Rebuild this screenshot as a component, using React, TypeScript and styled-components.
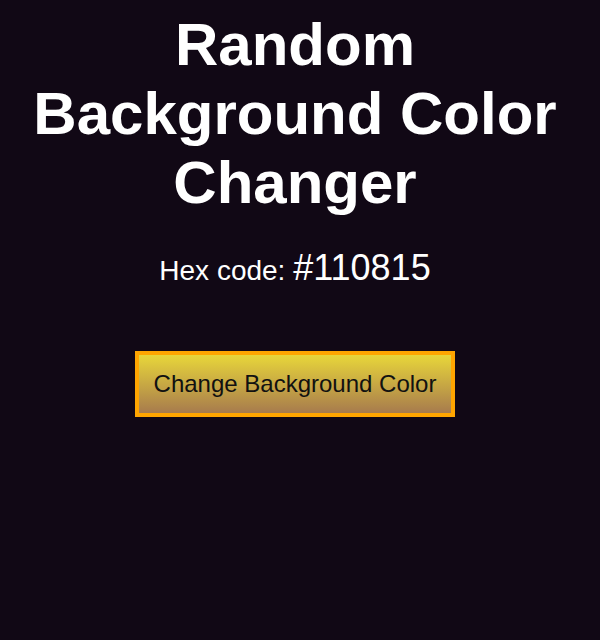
import React, { useState } from "react";
import styled, { createGlobalStyle } from "styled-components";

const GlobalStyle = createGlobalStyle<{ $bg: string }>`
  html, body {
    margin: 0;
    padding: 0;
    background: ${(p) => p.$bg};
    font-family: "Liberation Sans", Arial, sans-serif;
    color: #ffffff;
  }
`;

const Page = styled.main`
  display: flex;
  flex-direction: column;
  align-items: center;
  text-align: center;
  padding: 10px 10px 0 0;
`;

const Title = styled.h1`
  margin: 0 0 30px;
  font-size: 60px;
  font-weight: 700;
  line-height: normal;
  width: 540px;
`;

const HexLine = styled.p`
  margin: 0 0 62px;
  font-size: 28px;
  line-height: normal;
`;

const HexValue = styled.span`
  font-size: 36px;
`;

const ChangeButton = styled.button`
  font-family: "Liberation Sans", Arial, sans-serif;
  font-size: 24px;
  line-height: normal;
  color: #111111;
  padding: 15px;
  border: 4px solid #ffa500;
  border-radius: 0;
  background: linear-gradient(to bottom, #e8d63a, #a77b4d);
  cursor: pointer;
`;

const randomHex = () =>
  "#" +
  Math.floor(Math.random() * 0xffffff)
    .toString(16)
    .padStart(6, "0");

export default function App() {
  const [color, setColor] = useState("#110815");
  return (
    <>
      <GlobalStyle $bg={color} />
      <Page>
        <Title>Random Background Color Changer</Title>
        <HexLine>
          Hex code: <HexValue>{color}</HexValue>
        </HexLine>
        <ChangeButton onClick={() => setColor(randomHex())}>
          Change Background Color
        </ChangeButton>
      </Page>
    </>
  );
}
